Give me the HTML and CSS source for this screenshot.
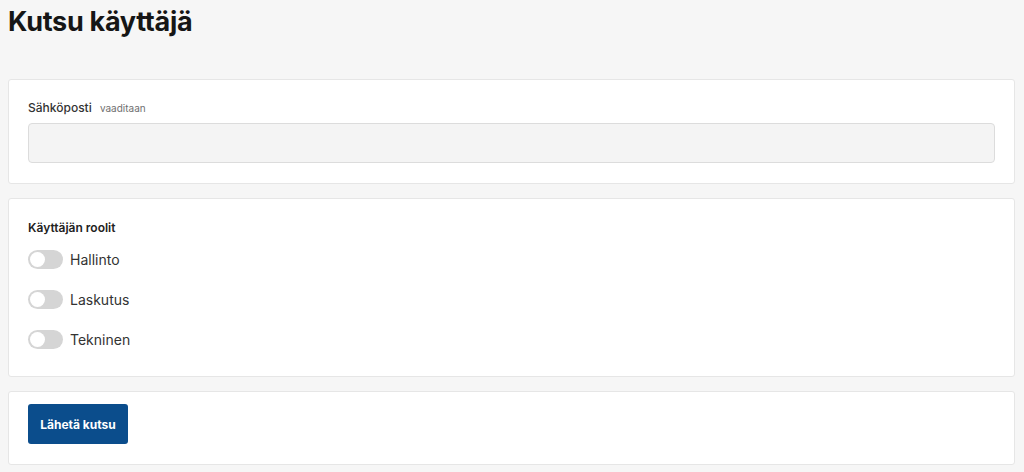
FILE: index.html
```html
<!DOCTYPE html>
<html lang="fi">
<head>
<meta charset="utf-8">
<title>Kutsu käyttäjä</title>
<link rel="stylesheet" href="styles.css">
</head>
<body>
<h1 class="title">Kutsu käyttäjä</h1>
<section class="card card-email">
  <label class="field-label" for="email">Sähköposti <span class="hint">vaaditaan</span></label>
  <input class="text-input" id="email" type="email">
</section>
<section class="card card-roles">
  <div class="group-label">Käyttäjän roolit</div>
  <div class="toggle-row"><span class="toggle"><span class="knob"></span></span><span class="toggle-text">Hallinto</span></div>
  <div class="toggle-row"><span class="toggle"><span class="knob"></span></span><span class="toggle-text">Laskutus</span></div>
  <div class="toggle-row"><span class="toggle"><span class="knob"></span></span><span class="toggle-text">Tekninen</span></div>
</section>
<section class="card card-actions">
  <button class="btn-primary" type="button">Lähetä kutsu</button>
</section>
</body>
</html>
```
FILE: styles.css
```css
* { box-sizing: border-box; }
html, body { margin: 0; }
body {
  background: #f6f6f6;
  font-family: Inter, "Noto Sans", "Liberation Sans", sans-serif;
  color: #222;
  padding: 0 9px 0 8px;
}
.title {
  margin: 0;
  padding-top: 4px;
  height: 79px;
  font-size: 27px;
  line-height: 36px;
  font-weight: 700;
  letter-spacing: -0.3px;
  color: #161616;
}
.card {
  background: #fff;
  border: 1px solid #e6e6e6;
  border-radius: 3px;
  margin-bottom: 14px;
}
.card-email { padding: 19px 19px 20px; }
.field-label {
  display: block;
  font-size: 12px;
  line-height: 18px;
  font-weight: 500;
  color: #333;
  margin-bottom: 6px;
}
.hint {
  font-size: 10px;
  font-weight: 400;
  color: #6f6f6f;
  margin-left: 5px;
}
.text-input {
  display: block;
  width: 100%;
  height: 40px;
  background: #f4f4f4;
  border: 1px solid #dcdcdc;
  border-radius: 4px;
  font: inherit;
}
.card-roles { padding: 19px 19px 17px; }
.group-label {
  font-size: 12px;
  line-height: 20px;
  font-weight: 600;
  color: #222;
  margin-bottom: 1px;
}
.toggle-row {
  display: flex;
  align-items: center;
  gap: 7px;
  height: 40px;
}
.toggle {
  position: relative;
  display: block;
  width: 35px;
  height: 19px;
  border-radius: 10px;
  background: #d5d5d5;
}
.knob {
  position: absolute;
  left: 2px;
  top: 2px;
  width: 15px;
  height: 15px;
  border-radius: 50%;
  background: #fff;
}
.toggle-text {
  font-size: 14px;
  color: #333;
}
.card-actions { padding: 12px 19px 20px; }
.btn-primary {
  display: block;
  width: 100px;
  height: 40px;
  border: 0;
  border-radius: 3px;
  background: #0b4d8c;
  color: #fff;
  font: inherit;
  font-size: 12px;
  font-weight: 700;
}
```
